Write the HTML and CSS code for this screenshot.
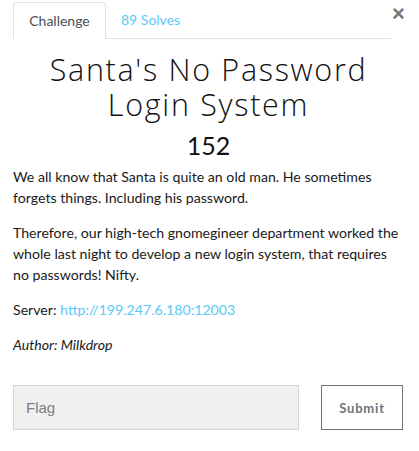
FILE: index.html
```html
<!DOCTYPE html>
<html>
<head>
<meta charset="utf-8">
<link rel="stylesheet" href="styles.css">
</head>
<body>
<div class="modal">
  <div class="tabs-row">
    <ul class="tabs">
      <li class="tab active">Challenge</li>
      <li class="tab link">89 Solves</li>
    </ul>
    <span class="close">&times;</span>
  </div>
  <h2 class="title">Santa's No Password<br>Login System</h2>
  <h3 class="value">152</h3>
  <div class="desc">
    <p>We all know that Santa is quite an old man. He sometimes forgets things. Including his password.</p>
    <p>Therefore, our high-tech gnomegineer department worked the whole last night to develop a new login system, that requires no passwords! Nifty.</p>
    <p>Server: <a href="#">http://199.247.6.180:12003</a></p>
    <p><em>Author: Milkdrop</em></p>
  </div>
  <form class="flag-form">
    <input class="flag-input" type="text" placeholder="Flag">
    <button class="submit" type="button">Submit</button>
  </form>
</div>
</body>
</html>
```
FILE: styles.css
```css
html, body { margin: 0; padding: 0; background: #fff; }
body { font-family: Lato, "Liberation Sans", sans-serif; color: #212529; }
.modal { padding: 2px 15px 0 13px; width: 419px; box-sizing: border-box; }
.tabs-row { display: flex; align-items: flex-start; }
.tabs { list-style: none; margin: 0; padding: 0; display: flex; flex: 0 0 378px; border-bottom: 1px solid #dee2e6; height: 36px; }
.tab { font-size: 14px; padding: 0 16px; line-height: 36px; height: 36px; }
.tab.active { color: #495057; border: 1px solid #dee2e6; border-bottom-color: #fff; border-radius: 4px 4px 0 0; height: 37px; line-height: 36px; box-sizing: border-box; width: 93px; padding: 0; text-align: center; }
.tab.link { color: #5bc9f8; padding-left: 15px; }
.close { font-size: 22px; color: #777; line-height: 20px; margin-left: 1px; margin-top: 2px; font-family: "Liberation Sans", sans-serif; font-weight: bold; }
.title { font-family: "Open Sans", sans-serif; font-weight: 300; font-size: 30.5px; line-height: 35px; text-align: center; margin: 12.5px 0 0; padding-right: 0; color: #111; letter-spacing: 1.7px; }
.value { font-weight: 400; font-size: 25px; text-align: center; margin: 8.5px 0 0; line-height: 30px; color: #111; padding-right: 0; }
.desc { margin-top: 6px; }
.desc p { font-size: 14.15px; line-height: 21px; margin: 0 0 14px; color: #1a1a1a; }
.desc a { color: #5bc9f8; text-decoration: none; }
.flag-form { display: flex; gap: 22px; margin-top: 30px; }
.flag-input { width: 286px; height: 45px; box-sizing: border-box; background: #f0f0f0; border: 1px solid #d4d4d8; padding: 0 12px; font-size: 15px; font-family: "Liberation Sans", sans-serif; }
.flag-input::placeholder { color: #7b7f86; }
.submit { width: 82px; height: 45px; box-sizing: border-box; background: #fff; border: 1px solid #6c757d; color: #6c757d; font-family: Lato, sans-serif; font-weight: bold; font-size: 13px; letter-spacing: 0.8px; padding: 0; }
```
